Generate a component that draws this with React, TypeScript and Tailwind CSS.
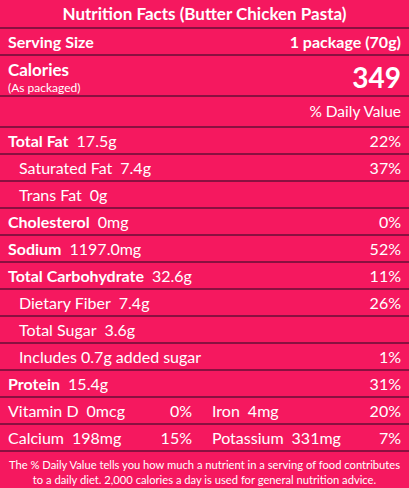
import React from 'react';

type Row = {
  label: string;
  value?: string;
  dv?: string;
  bold?: boolean;
  indent?: boolean;
};

const rows: Row[] = [
  { label: 'Total Fat', value: '17.5g', dv: '22%', bold: true },
  { label: 'Saturated Fat', value: '7.4g', dv: '37%', indent: true },
  { label: 'Trans Fat', value: '0g', indent: true },
  { label: 'Cholesterol', value: '0mg', dv: '0%', bold: true },
  { label: 'Sodium', value: '1197.0mg', dv: '52%', bold: true },
  { label: 'Total Carbohydrate', value: '32.6g', dv: '11%', bold: true },
  { label: 'Dietary Fiber', value: '7.4g', dv: '26%', indent: true },
  { label: 'Total Sugar', value: '3.6g', indent: true },
  { label: 'Includes 0.7g added sugar', dv: '1%', indent: true },
  { label: 'Protein', value: '15.4g', dv: '31%', bold: true },
];

const minerals = [
  [
    { label: 'Vitamin D', value: '0mcg', dv: '0%' },
    { label: 'Iron', value: '4mg', dv: '20%' },
  ],
  [
    { label: 'Calcium', value: '198mg', dv: '15%' },
    { label: 'Potassium', value: '331mg', dv: '7%' },
  ],
];

function App() {
  return (
    <div
      className="w-[409px] h-[488px] bg-[#f5185f] text-white overflow-hidden"
      style={{ fontFamily: 'Lato, "Open Sans", sans-serif' }}
    >
      {/* Title */}
      <div className="h-[29px] flex items-center justify-center border-b-2 border-[#8a1040] text-[17px] font-bold">
        Nutrition Facts (Butter Chicken Pasta)
      </div>

      {/* Serving */}
      <div className="h-[27px] flex items-center justify-between px-2 border-b-2 border-[#8a1040] text-[16px] font-bold">
        <span>Serving Size</span>
        <span>1 package (70g)</span>
      </div>

      {/* Calories */}
      <div className="h-[41px] flex items-center justify-between px-2 pt-[3px] border-b-2 border-[#8a1040]">
        <div className="flex flex-col leading-none">
          <span className="text-[17px] font-bold">Calories</span>
          <span className="text-[12px] mt-1">(As packaged)</span>
        </div>
        <span className="text-[28px] font-bold">349</span>
      </div>

      {/* DV header */}
      <div className="h-[31px] flex items-center justify-end px-2 border-b-2 border-[#8a1040] text-[15.5px]">
        % Daily Value
      </div>

      {rows.map((r) => (
        <div
          key={r.label}
          className="h-[27px] flex items-center justify-between px-2 border-b-2 border-[#8a1040] text-[16px]"
        >
          <span className={r.indent ? 'pl-[11px]' : ''}>
            <span className={r.bold ? 'font-bold' : ''}>{r.label}</span>
            {r.value && <span className="ml-2">{r.value}</span>}
          </span>
          <span>{r.dv}</span>
        </div>
      ))}

      {minerals.map((pair, i) => (
        <div
          key={i}
          className="h-[27px] grid grid-cols-[196px_1fr] items-center px-2 border-b-2 border-[#8a1040] text-[16px]"
        >
          {pair.map((m, j) => (
            <div key={m.label} className={`flex justify-between ${j === 0 ? 'pr-3' : 'pl-[8px]'}`}>
              <span>
                {m.label}
                <span className="ml-2">{m.value}</span>
              </span>
              <span>{m.dv}</span>
            </div>
          ))}
        </div>
      ))}

      {/* Footer */}
      <div className="pt-[5px] text-center text-[11.2px] leading-[15px] whitespace-nowrap">
        The % Daily Value tells you how much a nutrient in a serving of food contributes
        <br />
        to a daily diet. 2,000 calories a day is used for general nutrition advice.
      </div>
    </div>
  );
}

export default App;
